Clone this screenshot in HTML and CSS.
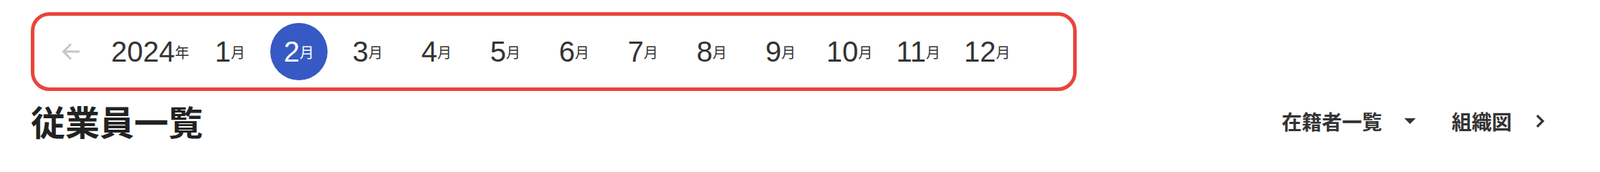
FILE: index.html
```html
<!DOCTYPE html>
<html lang="ja">
<head>
<meta charset="utf-8">
<title>従業員一覧</title>
<link rel="stylesheet" href="styles.css">
</head>
<body>
<div class="page">
  <nav class="month-bar">
    <button class="nav-btn" type="button" aria-label="前の年">
      <svg width="26" height="24" viewBox="0 0 26 24"><path d="M25 12H2.5M13 1.5L2.5 12 13 22.5" fill="none" stroke="#c6c6c6" stroke-width="3"/></svg>
    </button>
    <div class="year">2024<span class="unit">年</span></div>
    <a class="month">1<span class="unit">月</span></a>
    <a class="month active">2<span class="unit">月</span></a>
    <a class="month">3<span class="unit">月</span></a>
    <a class="month">4<span class="unit">月</span></a>
    <a class="month">5<span class="unit">月</span></a>
    <a class="month">6<span class="unit">月</span></a>
    <a class="month">7<span class="unit">月</span></a>
    <a class="month">8<span class="unit">月</span></a>
    <a class="month">9<span class="unit">月</span></a>
    <a class="month">10<span class="unit">月</span></a>
    <a class="month">11<span class="unit">月</span></a>
    <a class="month">12<span class="unit">月</span></a>
  </nav>
  <header class="header">
    <h1 class="title">従業員一覧</h1>
    <div class="links">
      <div class="dropdown">
        <span class="link-text">在籍者一覧</span>
        <svg class="caret" width="16" height="8" viewBox="0 0 16 8"><polygon points="0,0 16,0 8,8" fill="#333"/></svg>
      </div>
      <a class="org-link">
        <span class="link-text">組織図</span>
        <svg class="chevron" width="13" height="20" viewBox="0 0 13 20"><path d="M2.2 2.2l8 7.8-8 7.8" fill="none" stroke="#333" stroke-width="3.2"/></svg>
      </a>
    </div>
  </header>
</div>
</body>
</html>
```
FILE: styles.css
```css
html, body {
  margin: 0;
  background: #ffffff;
}

body {
  font-family: "Liberation Sans", "Noto Sans CJK JP", sans-serif;
  color: #333333;
}

.page {
  padding: 17px 77px 0 43px;
}

.month-bar {
  display: flex;
  align-items: center;
  gap: 16px;
  width: 1459px;
  box-sizing: border-box;
  border: 5px solid #e8453c;
  border-radius: 26px;
  padding: 10px 10px 10px 11px;
}

.nav-btn {
  width: 80px;
  height: 80px;
  display: flex;
  align-items: center;
  justify-content: center;
  border: 0;
  padding: 0;
  background: transparent;
}

.year {
  font-size: 40px;
  height: 80px;
  display: flex;
  align-items: center;
  padding-right: 1px;
}

.unit {
  font-family: "Noto Sans CJK JP", sans-serif;
  font-size: 20px;
}

.month {
  width: 80px;
  height: 80px;
  border-radius: 50%;
  display: flex;
  align-items: center;
  justify-content: center;
  font-size: 40px;
  color: #333333;
}

.month.active {
  background: #3759c4;
  color: #ffffff;
}

.header {
  display: flex;
  justify-content: space-between;
  align-items: center;
  margin-top: 8px;
}

.title {
  margin: 0;
  font-family: "Noto Sans CJK JP", sans-serif;
  font-size: 48px;
  font-weight: 700;
  line-height: 1.4;
  color: #222222;
}

.links {
  display: flex;
  align-items: center;
  gap: 50px;
}

.dropdown {
  display: flex;
  align-items: center;
  gap: 31px;
}

.org-link {
  display: flex;
  align-items: center;
  gap: 33px;
}

.link-text {
  font-family: "Noto Sans CJK JP", sans-serif;
  font-size: 28px;
  font-weight: 700;
  color: #333333;
}
```
